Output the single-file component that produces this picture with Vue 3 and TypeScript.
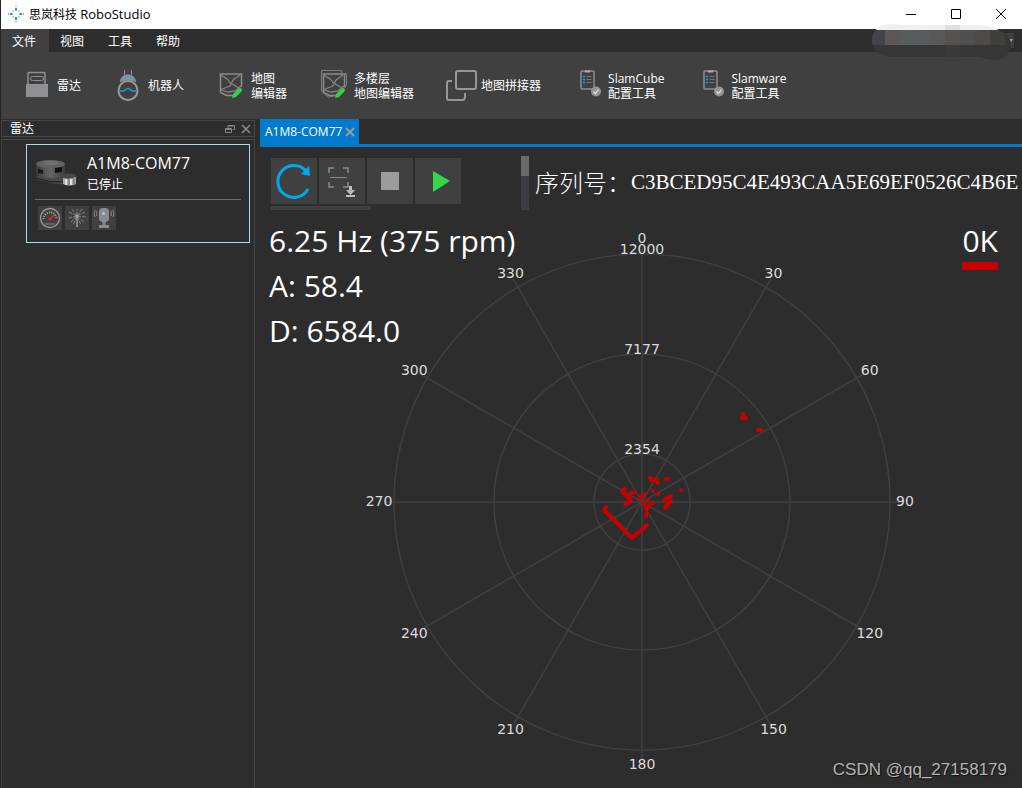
<script setup lang="ts">
import { ref } from 'vue'

interface Tool {
  icon: string
  lines: string[]
}

const menus: string[] = ['文件', '视图', '工具', '帮助']
const activeMenu = ref('文件')

const tools: Tool[] = [
  { icon: 'lidar', lines: ['雷达'] },
  { icon: 'robot', lines: ['机器人'] },
  { icon: 'map', lines: ['地图', '编辑器'] },
  { icon: 'maps', lines: ['多楼层', '地图编辑器'] },
  { icon: 'stitch', lines: ['地图拼接器'] },
  { icon: 'config', lines: ['SlamCube', '配置工具'] },
  { icon: 'config', lines: ['Slamware', '配置工具'] },
]

const readouts: string[] = ['6.25 Hz (375 rpm)', 'A: 58.4', 'D: 6584.0']

const rings = [
  { radius: 248, label: '12000' },
  { radius: 148, label: '7177' },
  { radius: 48, label: '2354' },
]

const spokes = Array.from({ length: 12 }, (_, i) => {
  const angle = i * 30
  const rad = (angle * Math.PI) / 180
  return {
    angle,
    x: Math.sin(rad) * 258,
    y: -Math.cos(rad) * 258,
    labelX: Math.sin(rad) * 263,
    labelY: -Math.cos(rad) * 263 + 4,
  }
})

const echoes: string[] = [
  '-36,5 -38,8 -10,36 5,23',
  '-17,-13 -20,-11 -17,-8 -14,-5 -11,-2 -14,1 -17,2',
  '-11,-9 -7,-10',
  '-3,-4 0,-5 2,-8',
  '8,-24 11,-21 14,-23 16,-19',
  '24,-23 26,-23',
  '39,-12 39,-12',
  '11,-11 11,-11',
  '16,-8 16,-8',
  '22,-2 29,-6',
  '25,2 29,-1 23,6',
  '6,-2 6,-2',
  '11,1 11,1',
  '1,2 3,2',
  '8,3 4,7',
  '5,11 4,14',
  '101,-88 100,-84 104,-84',
  '116,-72 119,-72',
]

const mosaic: string[] = ['#43444a', '#5a5756', '#585c5d', '#595a5c', '#5a5856', '#545352', '#504f4f', '#4d4b49', '#403f3d', '#363636']
</script>

<template>
  <div class="window">
    <header class="titlebar">
      <svg class="logo" viewBox="0 0 16 16" aria-hidden="true">
        <g fill="#3f86cc">
          <rect x="7" y="2" width="2" height="3" />
          <rect x="7" y="11" width="2" height="3" />
          <rect x="2" y="7" width="3" height="2" />
          <rect x="11" y="7" width="3" height="2" />
        </g>
        <g fill="#8fb6de">
          <rect x="7" y="0" width="2" height="1" />
          <rect x="7" y="15" width="2" height="1" />
          <rect x="0" y="7" width="1" height="2" />
          <rect x="15" y="7" width="1" height="2" />
        </g>
        <g fill="#b5dcf3">
          <rect x="4" y="4" width="2" height="2" />
          <rect x="10" y="4" width="2" height="2" />
          <rect x="4" y="10" width="2" height="2" />
          <rect x="10" y="10" width="2" height="2" />
        </g>
        <g fill="#a9c25a">
          <rect x="7" y="4" width="2" height="1" />
          <rect x="11" y="7" width="1" height="2" />
          <rect x="4" y="7" width="1" height="2" />
        </g>
      </svg>
      <h1>思岚科技 <span>RoboStudio</span></h1>
      <div class="controls">
        <button type="button" aria-label="最小化">
          <svg viewBox="0 0 12 12"><path d="M1 6.500h10" /></svg>
        </button>
        <button type="button" aria-label="最大化">
          <svg viewBox="0 0 12 12"><path d="M1.500 1.500h9v9h-9z" /></svg>
        </button>
        <button type="button" aria-label="关闭">
          <svg viewBox="0 0 12 12"><path d="M1 1l10 10M11 1L1 11" /></svg>
        </button>
      </div>
    </header>

    <nav class="menubar">
      <button v-for="m in menus" :key="m" type="button" :class="{ active: m === activeMenu }" @click="activeMenu = m">{{ m }}</button>
      <button type="button" class="account" aria-label="账户">
        <svg viewBox="0 0 5 4"><path d="M0 0h5L2.500 4z" fill="#a39a8c" /></svg>
      </button>
    </nav>

    <div class="toolbar">
      <button v-for="t in tools" :key="t.lines.join('')" type="button" class="tool">
        <svg class="tool-icon" viewBox="0 0 32 32" aria-hidden="true">
          <template v-if="t.icon === 'lidar'">
            <path d="M7 14V3.500q0-1 1-1h15q1 0 1 1V14" fill="none" stroke="#8e8e92" stroke-width="1.500" />
            <rect x="9.500" y="6.500" width="13" height="4" rx="2" fill="none" stroke="#8e8e92" />
            <rect x="5" y="14" width="22" height="13" fill="#8f8f94" />
          </template>
          <template v-else-if="t.icon === 'robot'">
            <circle cx="16" cy="20.500" r="9.500" fill="none" stroke="#98989c" stroke-width="2" />
            <path d="M8 12C8 7 12 4.500 16 4.500S24 7 24 12Q16 9 8 12z" fill="#8e8e8e" />
            <path d="M12.500 0v5M19.500 0v5" stroke="#8e8e8e" />
            <path d="M12 8h2M18 8h2" stroke="#35a9d8" stroke-width="2" />
            <path d="M8 21h4q4-5 8 0h4" fill="none" stroke="#18a0cf" stroke-width="1.500" />
          </template>
          <template v-else-if="t.icon === 'map' || t.icon === 'maps'">
            <path v-if="t.icon === 'maps'" d="M3.500 21V.500h20V3M26.500 3.500h2V15l-2 3M3.500 21l7 6 5-1" fill="none" stroke="#7c7c7c" />
            <path d="M26.500 17V4h-21v18.500l6 3H18" fill="none" stroke="#8b8b8b" stroke-width="1.500" />
            <path d="M6 5.500q7 3 9 7l9 5.500M25 5l-7 5-3 6-9 3.500M6 20l7 2 7-1 6-5" fill="none" stroke="#858585" stroke-width="1.300" />
            <path d="M20 25l5-5" stroke="#32d24a" stroke-width="4" stroke-linecap="round" />
            <path d="M17 28l1-4 3 3z" fill="#32d24a" />
          </template>
          <template v-else-if="t.icon === 'stitch'">
            <rect x="11" y="1" width="20" height="18" rx="2" fill="none" stroke="#97979b" stroke-width="2" />
            <path d="M7 11H4q-2 0-2 2v15q0 2 2 2h13q3 0 3-3v-4" fill="none" stroke="#97979b" stroke-width="2" />
          </template>
          <template v-else>
            <rect x="9" y="1" width="13" height="18" rx="1" fill="none" stroke="#8d8d91" stroke-width="1.500" />
            <path d="M13 1.500h5" stroke="#b0b0b0" stroke-width="2" />
            <path d="M11 6.500h2M11 9.500h2M11 12.500h2" stroke="#13a6d6" stroke-width="1.500" />
            <path d="M14.500 6.500h5M14.500 9.500h5M14.500 12.500h5" stroke="#777" />
            <circle cx="24" cy="21.500" r="5" fill="#939393" />
            <path d="M21.500 21.500l2 2 3-4" fill="none" stroke="#e4e4e4" stroke-width="1.200" />
          </template>
        </svg>
        <span class="tool-text"><span v-for="l in t.lines" :key="l">{{ l }}</span></span>
      </button>
    </div>

    <div class="workspace">
      <aside class="panel">
        <div class="panel-head">
          <h2>雷达</h2>
          <button type="button" aria-label="浮动">
            <svg viewBox="0 0 10 10"><path d="M3 4V1.500h6.500v4H8M.500 4.500h6v4h-6zM3 2h6M1 5.500h5" fill="none" stroke="#858585" /></svg>
          </button>
          <button type="button" aria-label="关闭面板">
            <svg viewBox="0 0 10 10"><path d="M1 1l8 8M9 1L1 9" stroke="#929292" stroke-width="1.300" /></svg>
          </button>
        </div>
        <div class="panel-body">
          <article class="device">
            <div class="device-top">
              <svg class="device-pic" viewBox="0 0 42 28" aria-hidden="true">
                <defs>
                  <linearGradient id="drum" x1="0" x2="1" y1="0" y2="0">
                    <stop offset="0" stop-color="#3a3a3a" />
                    <stop offset=".5" stop-color="#666" />
                    <stop offset="1" stop-color="#3c3c3c" />
                  </linearGradient>
                </defs>
                <path d="M0 19q5-5 18-5l21 1q3 1 2 4l-1 3q-12 5-24 2L3 21q-3-1-3-2z" fill="#484848" />
                <path d="M0 19q14 5 28 4" fill="none" stroke="#1d1d1d" />
                <path d="M1 6v9q4 4 15 4t14-4V6z" fill="url(#drum)" />
                <ellipse cx="15.500" cy="5" rx="14.500" ry="4" fill="#626262" />
                <ellipse cx="16" cy="4" rx="8" ry="2" fill="#707070" />
                <path d="M20 9l7-1v5l-7 1z" fill="#101010" />
                <path d="M3 10l5 1v4l-5-1z" fill="#171717" />
                <path d="M28 19q6 2 13-1v7q-6 3-13 0z" fill="#a9a9a9" />
                <path d="M31 20v6M36 20v6" stroke="#e0dfda" stroke-width="2" />
                <path d="M34 20v6M39 19v6" stroke="#666" />
              </svg>
              <div class="device-text">
                <strong>A1M8-COM77</strong>
                <span>已停止</span>
              </div>
            </div>
            <div class="device-actions">
              <button type="button" aria-label="转速">
                <svg viewBox="0 0 24 24">
                  <circle cx="12" cy="12" r="9.500" fill="none" stroke="#999" stroke-width="1.300" />
                  <path d="M5.500 13a6.500 6.500 0 0 1 13 0" fill="none" stroke="#aaa" stroke-width="2" stroke-dasharray="1 1.200" />
                  <path d="M12 13l4-4" stroke="#e02b35" stroke-width="1.300" />
                  <circle cx="12" cy="13" r="1.500" fill="#e02b35" />
                  <path d="M7 18h10" stroke="#888" />
                </svg>
              </button>
              <button type="button" aria-label="扫描">
                <svg viewBox="0 0 24 24">
                  <path d="M12 10V3M12 10L7 3M12 10l5-7M12 10L4 6M12 10l8-4M12 10l-8 2M12 10l9 1M12 10l-7 7M12 10l7 6M12 10l-4 9M12 10l4 9" stroke="#828282" stroke-dasharray="4 1" />
                  <path d="M12 9v12" stroke="#9a9a9a" stroke-width="1.500" />
                  <circle cx="12" cy="10" r="1.500" fill="#aaa" />
                </svg>
              </button>
              <button type="button" aria-label="信号">
                <svg viewBox="0 0 24 24">
                  <rect x="7" y="2" width="10" height="14" rx="4" fill="#8b8b8b" />
                  <path d="M10.500 16h3v3h-3zM7 19h10v3H7z" fill="#8b8b8b" />
                  <path d="M5 5q-1 3 0 5M3 4q-2 4 0 7M19 5q1 3 0 5M21 4q2 4 0 7" fill="none" stroke="#8b8b8b" />
                  <circle cx="11.500" cy="7.500" r="1.500" fill="#8fd6f1" />
                </svg>
              </button>
            </div>
          </article>
        </div>
      </aside>

      <main class="main">
        <div class="tabs">
          <div class="tab">
            <a href="#scan">A1M8-COM77</a>
            <button type="button" aria-label="关闭标签">
              <svg viewBox="0 0 10 10"><path d="M1 1l8 8M9 1L1 9" stroke="#9a9a9a" stroke-width="2" /></svg>
            </button>
          </div>
        </div>

        <div class="scan-bar">
          <div class="scan-tools">
            <div class="scan-buttons">
              <button type="button" aria-label="重新连接">
                <svg viewBox="0 0 46 46">
                  <path d="M37 31A16 16 0 1 1 35 13" fill="none" stroke="#00a8ef" stroke-width="3" />
                  <path d="M38 8l1 10-9-2z" fill="#00a8ef" />
                </svg>
              </button>
              <button type="button" aria-label="保存扫描">
                <svg viewBox="0 0 46 46">
                  <path d="M10 15v-5h5M24 10h5v5M10 24v5h5M24 29h5v-5" fill="none" stroke="#8a8a8a" stroke-width="1.500" />
                  <path d="M11 19.500h17" stroke="#8a8a8a" />
                  <path d="M30 28h3v4h3l-4.500 5L27 32h3zM27 37h9v2h-9z" fill="#bdbdbd" />
                </svg>
              </button>
              <button type="button" aria-label="停止">
                <svg viewBox="0 0 46 46"><rect x="14" y="14" width="18" height="18" fill="#9c9c9c" /></svg>
              </button>
              <button type="button" aria-label="开始">
                <svg viewBox="0 0 46 46"><path d="M18 13l17 10-17 11z" fill="#34d749" /></svg>
              </button>
            </div>
            <div class="h-scroll"></div>
          </div>
          <div class="v-scroll"></div>
          <p class="serial"><span>序列号：</span><span class="serial-no">C3BCED95C4E493CAA5E69EF0526C4B6E</span></p>
        </div>

        <section id="scan" class="scan">
          <svg class="radar" viewBox="0 0 762 573" role="img" aria-label="扫描图">
            <g transform="translate(382 287)">
              <g class="grid">
                <circle v-for="r in rings" :key="r.label" :r="r.radius" />
                <line v-for="s in spokes" :key="s.angle" x1="0" y1="0" :x2="s.x" :y2="s.y" />
              </g>
              <g class="echoes">
                <polyline v-for="(e, i) in echoes" :key="i" :points="e" />
              </g>
              <g class="labels">
                <text v-for="r in rings" :key="r.label" x="0" :y="-r.radius">{{ r.label }}</text>
                <text v-for="s in spokes" :key="s.angle" :x="s.labelX" :y="s.labelY">{{ s.angle }}</text>
              </g>
            </g>
          </svg>
          <div class="readouts">
            <p v-for="r in readouts" :key="r">{{ r }}</p>
          </div>
          <div class="rate">0K</div>
          <div class="watermark">CSDN @qq_27158179</div>
        </section>
      </main>
    </div>

    <svg class="redaction" viewBox="0 0 140 38" aria-hidden="true">
      <defs>
        <clipPath id="blob">
          <path d="M0 14Q3 1 17 0Q24 0 28 1H106Q122 2 130 8Q140 13 139 22Q137 35 124 36Q116 36 108 33H20Q3 32 0 18z" />
        </clipPath>
      </defs>
      <g clip-path="url(#blob)">
        <rect width="140" height="6" fill="#efefef" />
        <rect x="73" width="15" height="6" fill="#dedede" />
        <rect v-for="(c, i) in mosaic" :key="i" :x="i * 15 - 2" y="6" width="15" height="15" :fill="c" />
        <rect y="21" width="140" height="17" fill="#363636" />
        <rect x="73" y="21" width="15" height="17" fill="#393939" />
      </g>
    </svg>
  </div>
</template>

<style>
body {
  margin: 0;
  background: #2d2d2d;
}
</style>

<style scoped>
.window {
  position: relative;
  box-sizing: border-box;
  display: flex;
  flex-direction: column;
  min-height: 100vh;
  border-left: 1px solid #242424;
  background: #2d2d2d;
  color: #fff;
  font: 12px/16px "Open Sans", "Noto Sans CJK SC", sans-serif;
}

button {
  padding: 0;
  border: 0;
  background: none;
  color: inherit;
  font: inherit;
}

h1,
h2,
p {
  margin: 0;
  font: inherit;
}

svg {
  display: block;
}

.titlebar {
  display: flex;
  align-items: center;
  height: 28px;
  padding: 0 0 1px 7px;
  background: #fff;
  color: #000;
}

.logo {
  width: 16px;
  height: 16px;
  margin-right: 5px;
}

.titlebar h1 {
  flex: 1;
}

.titlebar h1 span {
  font-size: 13px;
}

.controls {
  display: flex;
  height: 26px;
  margin-right: -1px;
}

.controls button {
  display: grid;
  place-items: center;
  width: 45px;
}

.controls svg {
  width: 12px;
  height: 12px;
  fill: none;
  stroke: #000;
  stroke-width: 1;
}

.menubar {
  display: flex;
  height: 23px;
}

.menubar button {
  padding: 3px 13px 0 11px;
}

.menubar .active {
  background: #404040;
}

.menubar .account {
  display: grid;
  place-items: center end;
  width: 12px;
  height: 15px;
  margin: 4px 8px 0 auto;
  padding: 0 1px 0 0;
  background: #404040;
}

.account svg {
  width: 5px;
  height: 4px;
}

.toolbar {
  display: flex;
  gap: 31px;
  height: 67px;
  padding-left: 20px;
  background: #404040;
}

.tool {
  display: flex;
  align-items: center;
  gap: 4px;
  white-space: nowrap;
}

.tool-icon {
  width: 32px;
  height: 32px;
}

.tool-text {
  display: flex;
  flex-direction: column;
  line-height: 15px;
  text-align: left;
}

.workspace {
  display: flex;
  flex: 1;
}

.panel {
  display: flex;
  flex-direction: column;
  gap: 2px;
  width: 254px;
  flex-shrink: 0;
  padding-top: 1px;
}

.panel-head {
  display: flex;
  align-items: center;
  gap: 6px;
  box-sizing: border-box;
  height: 17px;
  padding: 0 3px 0 8px;
  border: 1px solid #464646;
}

.panel-head h2 {
  flex: 1;
}

.panel-head svg {
  width: 10px;
  height: 10px;
}

.panel-body {
  flex: 1;
  padding: 4px 4px 0 24px;
  border: 1px solid #464646;
  border-bottom: 0;
}

.device {
  padding: 8px 8px 12px;
  border: 1px solid #add8e6;
}

.device-top {
  display: flex;
  gap: 10px;
  padding-bottom: 2px;
  border-bottom: 1px solid #6a6a6a;
}

.device-pic {
  width: 42px;
  height: 28px;
  margin-top: 6px;
}

.device-text {
  display: flex;
  flex-direction: column;
}

.device-text strong {
  font-size: 16px;
  font-weight: 400;
  line-height: 20px;
}

.device-text span {
  line-height: 24px;
}

.device-actions {
  display: flex;
  gap: 3px;
  padding: 6px 3px 0;
}

.device-actions button {
  background: #404040;
}

.device-actions svg {
  width: 24px;
  height: 24px;
}

.main {
  display: flex;
  flex: 1;
  flex-direction: column;
  min-width: 0;
  margin-left: 5px;
}

.tabs {
  display: flex;
  border-bottom: 3px solid #007acc;
}

.tab {
  display: flex;
  align-items: center;
  gap: 3px;
  height: 25px;
  padding: 0 4px 0 5px;
  background: #007acc;
}

.tab a {
  color: #fff;
  text-decoration: none;
}

.tab svg {
  width: 10px;
  height: 10px;
}

.scan-bar {
  display: flex;
  align-items: flex-start;
  height: 59px;
  padding: 9px 0 0 11px;
}

.scan-tools {
  flex: 0 0 250px;
  padding-top: 2px;
}

.scan-buttons {
  display: flex;
  gap: 2px;
}

.scan-buttons button {
  background: #404040;
}

.scan-buttons svg {
  width: 46px;
  height: 46px;
}

.h-scroll {
  width: 100px;
  height: 4px;
  margin-top: 2px;
  background: #404040;
}

.v-scroll {
  flex: 0 0 8px;
  height: 54px;
  background: linear-gradient(#6a6a6a 20px, #3e3e42 20px);
}

.serial {
  display: flex;
  align-items: center;
  height: 52px;
  padding-left: 6px;
  font: 24px/32px "Noto Sans CJK SC", sans-serif;
  font-weight: 300;
  white-space: nowrap;
}

.serial-no {
  font: 21px/32px "Liberation Serif", serif;
}

.scan {
  position: relative;
  flex: 1;
}

.radar {
  width: 100%;
  height: auto;
}

.grid {
  fill: none;
  stroke: #404040;
  stroke-width: 1.5;
}

.echoes {
  fill: none;
  stroke: #c80000;
  stroke-width: 4;
  stroke-linecap: round;
  stroke-linejoin: round;
}

.labels {
  fill: #dcdcdc;
  font: 14px "DejaVu Sans", sans-serif;
  text-anchor: middle;
}

.readouts {
  position: absolute;
  top: 3px;
  left: 9px;
  font-size: 30px;
  line-height: 45px;
}

.rate {
  position: absolute;
  top: 4px;
  right: 24px;
  border-bottom: 8px solid #c80000;
  font-size: 30px;
  line-height: 43px;
}

.watermark {
  position: absolute;
  right: 15px;
  bottom: 8px;
  color: #b4b4b4;
  font: 17px/20px "Liberation Sans", sans-serif;
  text-shadow: 1px 1px 1px #111;
}

.redaction {
  position: absolute;
  top: 24px;
  right: 10px;
  width: 140px;
  height: 38px;
}
</style>
